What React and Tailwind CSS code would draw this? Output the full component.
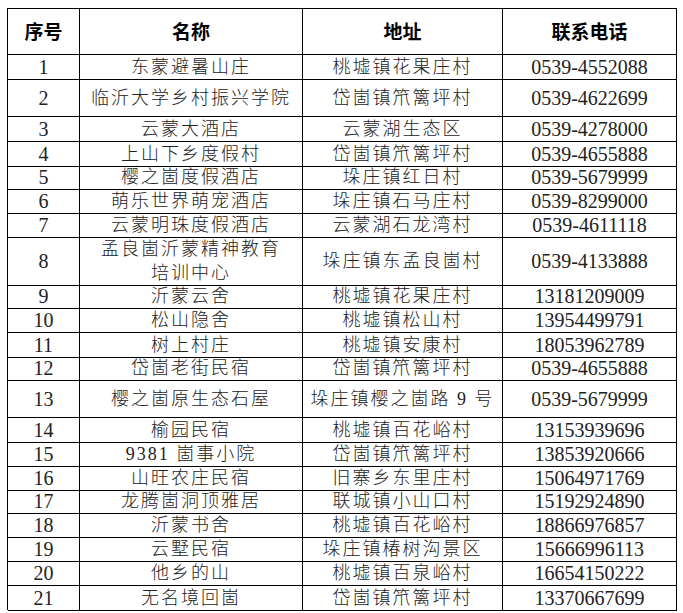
const rows = [
  { no: "1", name: "东蒙避暑山庄", addr: "桃墟镇花果庄村", tel: "0539-4552088", h: "h-[24px]" },
  { no: "2", name: "临沂大学乡村振兴学院", addr: "岱崮镇笊篱坪村", tel: "0539-4622699", h: "h-[38px]" },
  { no: "3", name: "云蒙大酒店", addr: "云蒙湖生态区", tel: "0539-4278000", h: "h-[25px]" },
  { no: "4", name: "上山下乡度假村", addr: "岱崮镇笊篱坪村", tel: "0539-4655888", h: "h-[23px]" },
  { no: "5", name: "樱之崮度假酒店", addr: "垛庄镇红日村", tel: "0539-5679999", h: "h-[24px]" },
  { no: "6", name: "萌乐世界萌宠酒店", addr: "垛庄镇石马庄村", tel: "0539-8299000", h: "h-[24px]" },
  { no: "7", name: "云蒙明珠度假酒店", addr: "云蒙湖石龙湾村", tel: "0539-4611118", h: "h-[24px]" },
  { no: "8", name: ["孟良崮沂蒙精神教育", "培训中心"], addr: "垛庄镇东孟良崮村", tel: "0539-4133888", h: "h-[47px]" },
  { no: "9", name: "沂蒙云舍", addr: "桃墟镇花果庄村", tel: "13181209009", h: "h-[24px]" },
  { no: "10", name: "松山隐舍", addr: "桃墟镇松山村", tel: "13954499791", h: "h-[25px]" },
  { no: "11", name: "树上村庄", addr: "桃墟镇安康村", tel: "18053962789", h: "h-[23px]" },
  { no: "12", name: "岱崮老街民宿", addr: "岱崮镇笊篱坪村", tel: "0539-4655888", h: "h-[24px]" },
  { no: "13", name: "樱之崮原生态石屋", addr: "垛庄镇樱之崮路 9 号", tel: "0539-5679999", h: "h-[38px]" },
  { no: "14", name: "榆园民宿", addr: "桃墟镇百花峪村", tel: "13153939696", h: "h-[24px]" },
  { no: "15", name: "9381 崮事小院", addr: "岱崮镇笊篱坪村", tel: "13853920666", h: "h-[24px]" },
  { no: "16", name: "山旺农庄民宿", addr: "旧寨乡东里庄村", tel: "15064971769", h: "h-[23px]" },
  { no: "17", name: "龙腾崮洞顶雅居", addr: "联城镇小山口村", tel: "15192924890", h: "h-[24px]" },
  { no: "18", name: "沂蒙书舍", addr: "桃墟镇百花峪村", tel: "18866976857", h: "h-[24px]" },
  { no: "19", name: "云墅民宿", addr: "垛庄镇椿树沟景区", tel: "15666996113", h: "h-[24px]" },
  { no: "20", name: "他乡的山", addr: "桃墟镇百泉峪村", tel: "16654150222", h: "h-[25px]" },
  { no: "21", name: "无名境回崮", addr: "岱崮镇笊篱坪村", tel: "13370667699", h: "h-[24px]" },
];

const cell = "flex items-center justify-center border-r border-b border-black text-center";
const cjk = "font-['Liberation_Serif','Noto_Sans_CJK_SC',serif] text-[18px] tracking-[2px] font-light text-[#222] leading-[24px]";
const num = "font-['Liberation_Serif','Noto_Sans_CJK_SC',serif] text-[20px] text-[#222] leading-[24px]";

export default function App() {
  return (
    <div className="w-[683px] h-[613px] bg-white pt-[8px] pl-[7px]">
      <div className="w-[670px] border-t border-l border-black">
        {/* header */}
        <div className="grid grid-cols-[72px_223px_200px_174px] h-[46px]">
          {["序号", "名称", "地址", "联系电话"].map((t) => (
            <div key={t} className={`${cell} font-['Noto_Sans_CJK_SC',sans-serif] text-[19px] font-bold text-black`}>
              {t}
            </div>
          ))}
        </div>

        {rows.map((r) => (
          <div key={r.no} className={`grid grid-cols-[72px_223px_200px_174px] ${r.h}`}>
            <div className={`${cell} ${num}`}>{r.no}</div>
            <div className={`${cell} ${cjk}`}>
              {Array.isArray(r.name) ? (
                <span>
                  {r.name[0]}
                  <br />
                  {r.name[1]}
                </span>
              ) : (
                r.name
              )}
            </div>
            <div className={`${cell} ${cjk}`}>{r.addr}</div>
            <div className={`${cell} ${num}`}>{r.tel}</div>
          </div>
        ))}
      </div>
    </div>
  );
}
